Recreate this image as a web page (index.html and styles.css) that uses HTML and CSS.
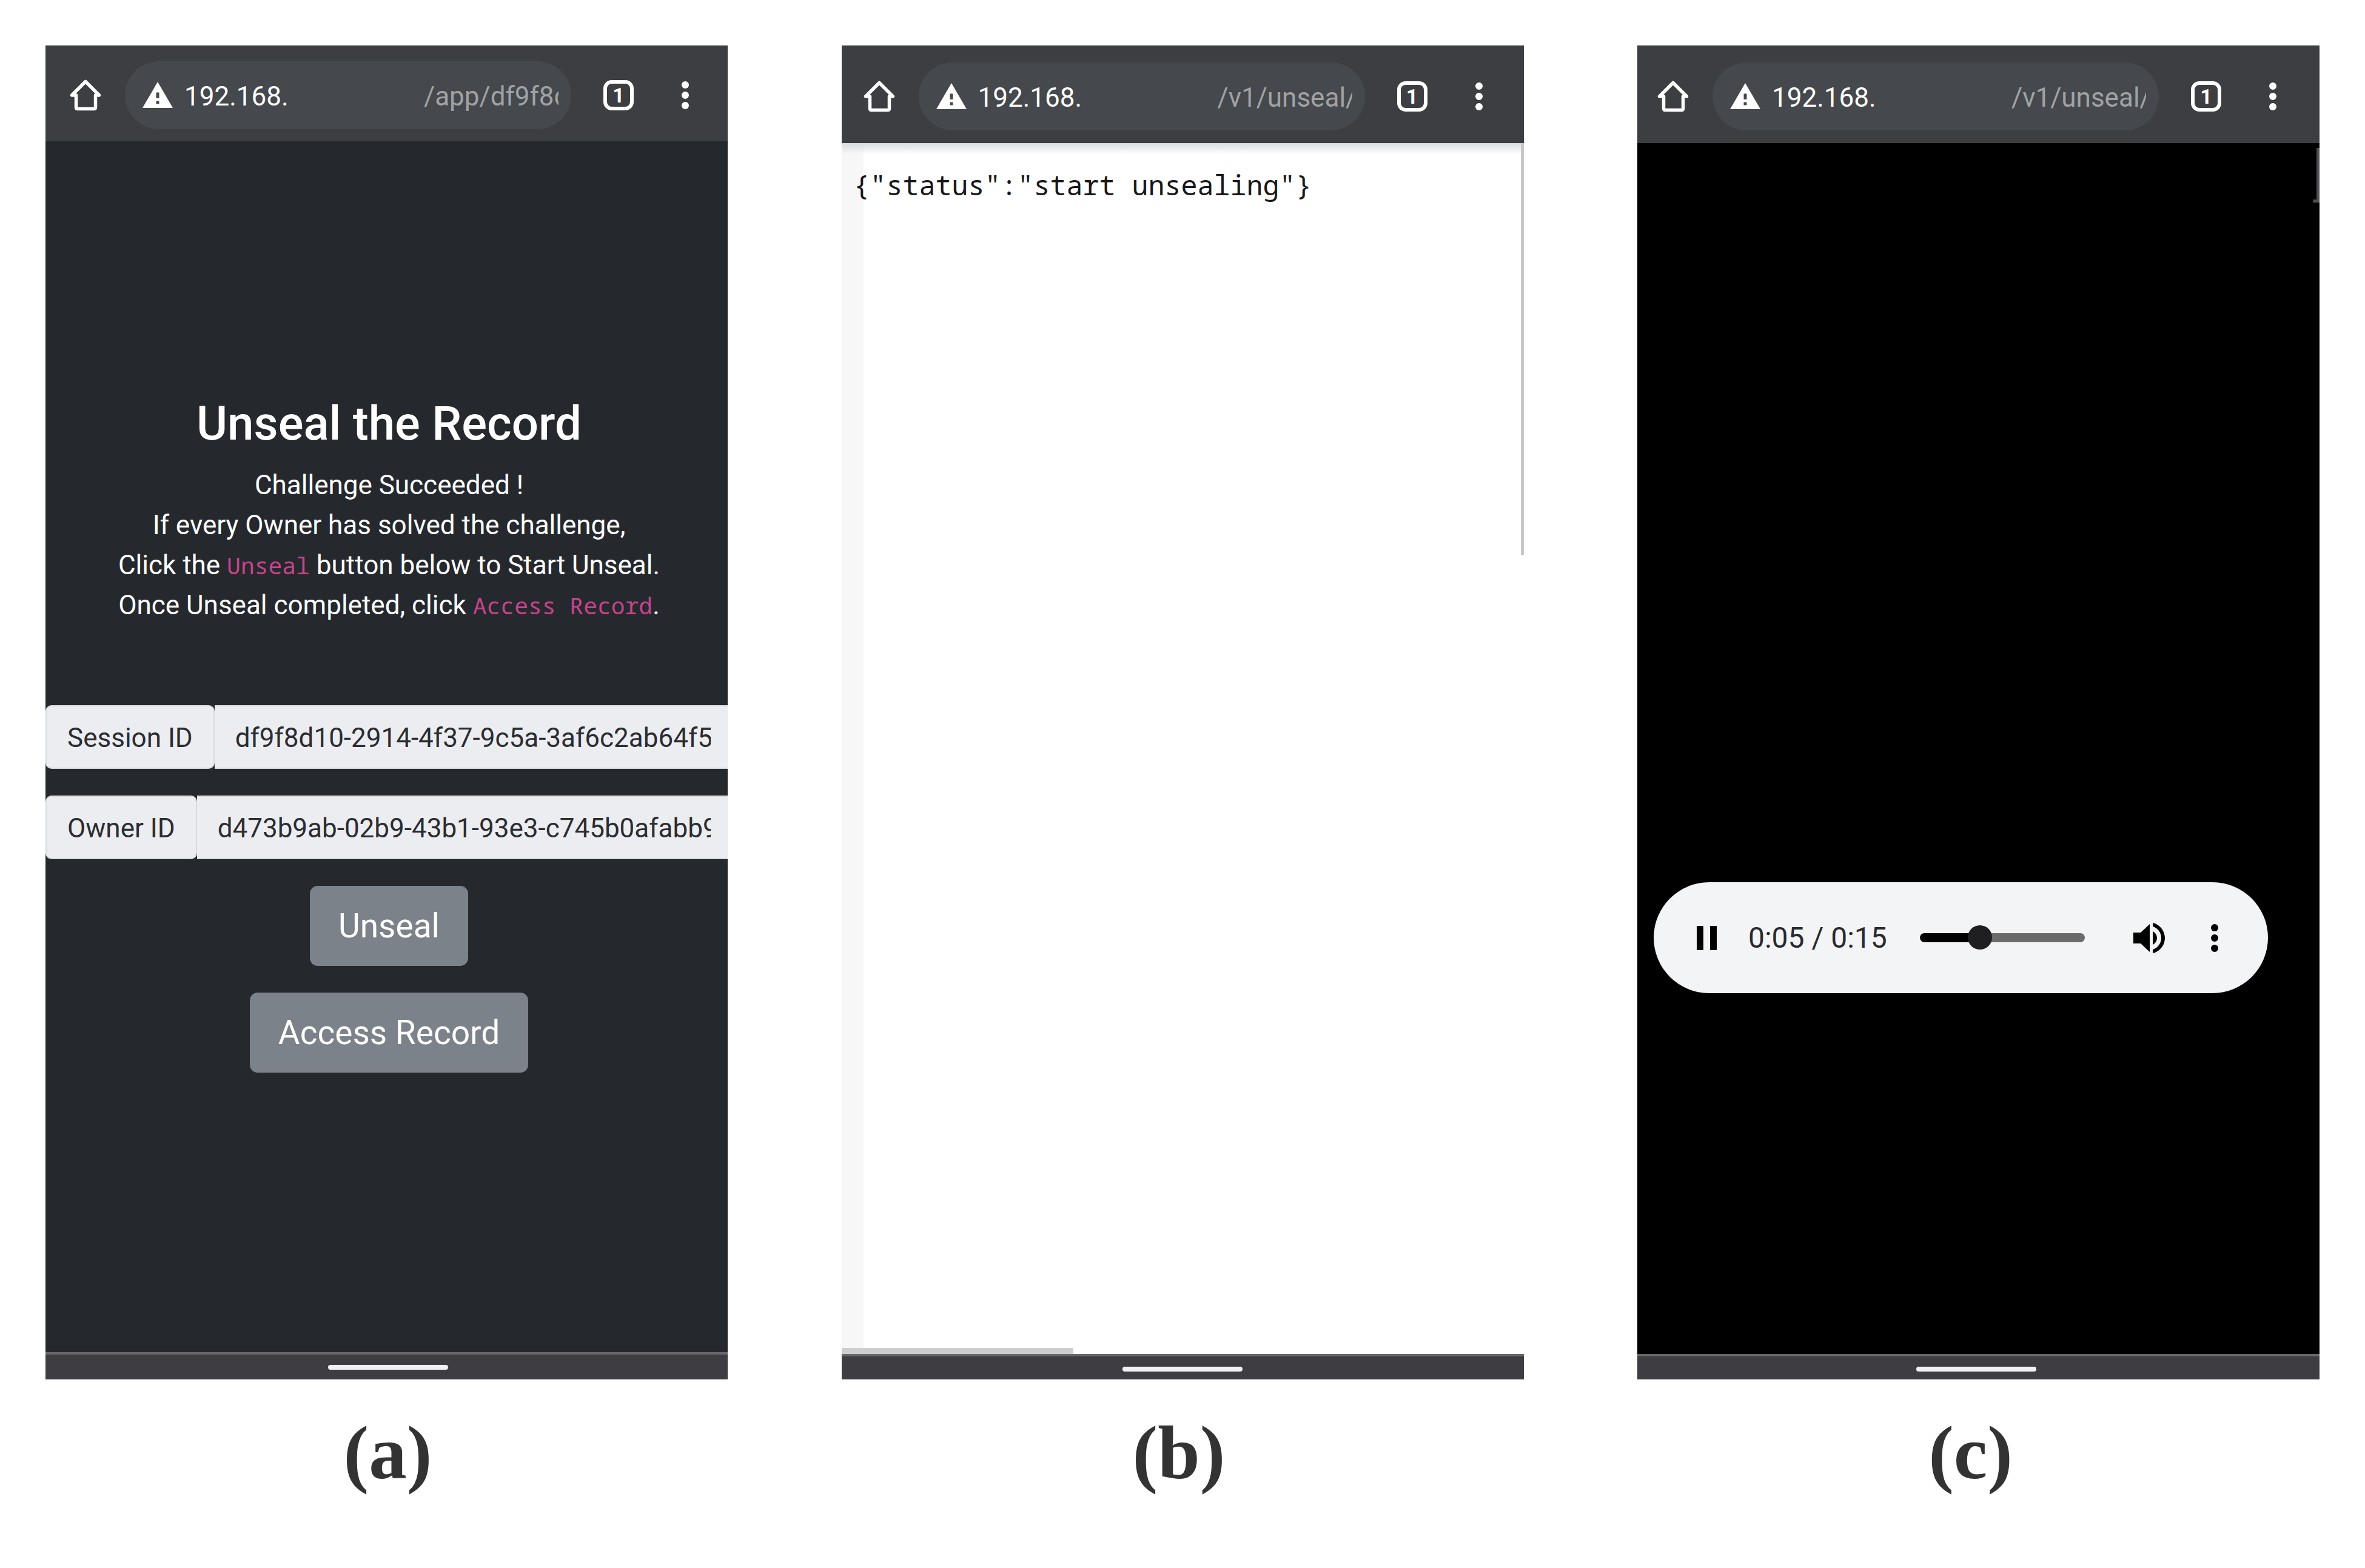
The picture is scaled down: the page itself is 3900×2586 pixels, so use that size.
FILE: index.html
```html
<!DOCTYPE html>
<html lang="en">
<head>
<meta charset="utf-8">
<meta name="viewport" content="width=device-width, initial-scale=1">
<title>Unseal the Record</title>
<link rel="stylesheet" href="styles.css">
</head>
<body>
<svg class="sprite" aria-hidden="true">
  <symbol id="home" viewBox="0 0 52 52"><path d="M26 3.500 3.500 26H10.500V46Q10.500 48.500 13 48.500H40Q42.500 48.500 42.500 46V26H48.500Z" fill="none" stroke="currentColor" stroke-width="5.500" stroke-linejoin="round"/></symbol>
  <symbol id="warning" viewBox="0 0 52 44"><path fill-rule="evenodd" d="M26 0 51 43H1ZM23.500 17.500V27H28.500V17.500ZM23.500 31.500V36.500H28.500V31.500Z" fill="currentColor"/></symbol>
  <symbol id="dots" viewBox="0 0 12 48"><g fill="currentColor"><circle cx="6" cy="7" r="6"/><circle cx="6" cy="24" r="6"/><circle cx="6" cy="41" r="6"/></g></symbol>
  <symbol id="pause" viewBox="0 0 36 42"><path d="M1 1H12V41H1ZM23 1H34V41H23Z" fill="currentColor"/></symbol>
  <symbol id="volume" viewBox="0 0 54 52"><path d="M0 17V35H12L27 49V3L12 17ZM32 15V37C36 35 39 31 39 26S36 17 32 15ZM32 1V7C40 9.500 46 17 46 26S40 42.500 32 45V51C43.500 48.500 52 38 52 26S43.500 3.500 32 1Z" fill="currentColor"/></symbol>
</svg>
<main class="figures">
  <figure class="shot shot-a">
    <div class="phone">
      <header class="toolbar">
        <button class="icon-button" type="button" aria-label="Home"><svg class="icon-home"><use href="#home"/></svg></button>
        <div class="address"><svg class="icon-warning"><use href="#warning"/></svg><span class="host">192.168.</span><span class="path">/app/df9f8d</span></div>
        <button class="tabs" type="button" aria-label="Open tabs">1</button>
        <button class="icon-button" type="button" aria-label="Menu"><svg class="icon-dots"><use href="#dots"/></svg></button>
      </header>
      <section class="screen screen-app">
        <div class="app">
          <h1>Unseal the Record</h1>
          <p class="lead">Challenge Succeeded !<br>If every Owner has solved the challenge,<br>Click the <code>Unseal</code> button below to Start Unseal.<br>Once Unseal completed, click <code>Access Record</code>.</p>
          <div class="input-group"><label for="session">Session ID</label><input id="session" type="text" readonly value="df9f8d10-2914-4f37-9c5a-3af6c2ab64f5"></div>
          <div class="input-group"><label for="owner">Owner ID</label><input id="owner" type="text" readonly value="d473b9ab-02b9-43b1-93e3-c745b0afabb9"></div>
          <button class="action" type="button">Unseal</button>
          <button class="action" type="button">Access Record</button>
        </div>
      </section>
      <footer class="navbar"><span class="handle"></span></footer>
    </div>
    <figcaption>(a)</figcaption>
  </figure>

  <figure class="shot shot-b">
    <div class="phone">
      <header class="toolbar">
        <button class="icon-button" type="button" aria-label="Home"><svg class="icon-home"><use href="#home"/></svg></button>
        <div class="address"><svg class="icon-warning"><use href="#warning"/></svg><span class="host">192.168.</span><span class="path">/v1/unseal/</span></div>
        <button class="tabs" type="button" aria-label="Open tabs">1</button>
        <button class="icon-button" type="button" aria-label="Menu"><svg class="icon-dots"><use href="#dots"/></svg></button>
      </header>
      <section class="screen screen-json">
        <pre>{"status":"start unsealing"}</pre>
        <span class="scroll-y"></span>
        <span class="scroll-x"></span>
      </section>
      <footer class="navbar"><span class="handle"></span></footer>
    </div>
    <figcaption>(b)</figcaption>
  </figure>

  <figure class="shot shot-c">
    <div class="phone">
      <header class="toolbar">
        <button class="icon-button" type="button" aria-label="Home"><svg class="icon-home"><use href="#home"/></svg></button>
        <div class="address"><svg class="icon-warning"><use href="#warning"/></svg><span class="host">192.168.</span><span class="path">/v1/unseal/</span></div>
        <button class="tabs" type="button" aria-label="Open tabs">1</button>
        <button class="icon-button" type="button" aria-label="Menu"><svg class="icon-dots"><use href="#dots"/></svg></button>
      </header>
      <section class="screen screen-audio">
        <div class="player">
          <button class="icon-button" type="button" aria-label="Pause"><svg class="icon-pause"><use href="#pause"/></svg></button>
          <span class="time">0:05 / 0:15</span>
          <input class="seek" type="range" min="0" max="100" value="34" aria-label="Position">
          <button class="icon-button" type="button" aria-label="Mute"><svg class="icon-volume"><use href="#volume"/></svg></button>
          <button class="icon-button" type="button" aria-label="More options"><svg class="icon-dots"><use href="#dots"/></svg></button>
        </div>
        <span class="scroll-corner"></span>
      </section>
      <footer class="navbar"><span class="handle"></span></footer>
    </div>
    <figcaption>(c)</figcaption>
  </figure>
</main>
</body>
</html>
```
FILE: styles.css
```css
* { box-sizing: border-box; }

body {
  margin: 0;
  background: #fff;
  font-family: Roboto, "Liberation Sans", sans-serif;
  font-size: 44px;
}

button, input { font: inherit; }
svg { display: block; }
.sprite { position: absolute; width: 0; height: 0; }

.figures {
  display: grid;
  grid-template-columns: repeat(3, minmax(0, 1fr));
  column-gap: 5%;
  padding: 75px;
}

.shot { margin: 0; }
.shot-a { --start: 40px; --end: 64px; --bar: 158px; --nav: 45px; --nudge: 4px; --caption: 4px; }
.shot-b { --start: 36px; --end: 68px; --bar: 161px; --nav: 42px; --nudge: 0px; --caption: -12px; }
.shot-c { --start: 33px; --end: 71px; --bar: 161px; --nav: 42px; --nudge: -8px; --caption: -26px; }

.phone {
  display: flex;
  flex-direction: column;
  min-height: 2200px;
  overflow: hidden;
}

/* Browser toolbar */
.toolbar {
  display: flex;
  align-items: center;
  height: var(--bar);
  padding: 6px var(--end) 0 var(--start);
  background: #3d3e42;
  color: #fff;
}

.icon-button {
  padding: 0;
  border: 0;
  background: none;
  color: inherit;
}

.icon-home { width: 52px; height: 52px; }
.icon-warning { flex: none; width: 52px; height: 44px; }
.icon-dots { width: 12px; height: 48px; }
.icon-pause { width: 36px; height: 42px; }
.icon-volume { width: 54px; height: 52px; }

.address {
  display: flex;
  flex: 1;
  align-items: center;
  min-width: 0;
  height: 112px;
  margin: 0 53px 0 39px;
  padding: 0 21px 0 28px;
  border-radius: 56px;
  background: #45484c;
  line-height: 52px;
}

.host,
.path { padding-top: 4px; }

.host { margin-left: 18px; }

.path {
  width: 222px;
  margin-left: auto;
  overflow: hidden;
  color: #a0a2a5;
  white-space: nowrap;
}

.tabs {
  width: 50px;
  height: 50px;
  margin-right: 79px;
  padding: 0;
  border: 6px solid #fff;
  border-radius: 14px;
  background: none;
  color: #fff;
  font-size: 34px;
  font-weight: 700;
  line-height: 38px;
}

.screen { position: relative; flex: 1; }

/* Unseal page */
.screen-app { background: #25292e; color: #fff; }

.app {
  display: flex;
  flex-direction: column;
  align-items: center;
  gap: 44px;
  width: calc(100% + 8px);
  padding-top: 420px;
}

.app h1 {
  margin: 0 0 -22px;
  font-size: 78px;
  font-weight: 500;
  line-height: 92px;
}

.lead {
  margin: 0 0 88px;
  line-height: 66px;
  text-align: center;
}

code, pre { font-family: "Noto Sans Mono", "Droid Sans Mono", "Liberation Mono", monospace; }
code { color: #c7438a; font-size: 38px; }

.input-group {
  display: flex;
  width: 100%;
  height: 105px;
  color: #2b2d31;
}

.input-group label,
.input-group input {
  border: 2px solid #d8dade;
  background: #ecedf1;
  padding: 2px 34px 0;
  line-height: 100px;
}

.input-group label { border-radius: 10px; white-space: nowrap; }

.input-group input {
  flex: 1;
  min-width: 0;
  border-left: 0;
  border-radius: 0;
  color: inherit;
}

.action {
  height: 132px;
  padding: 0 47px;
  border: 0;
  border-radius: 13px;
  background: #7b828a;
  color: #fff;
  font-size: 55px;
  line-height: 132px;
}

/* JSON response */
.screen-json {
  background: linear-gradient(#d9dade, transparent 18px), linear-gradient(90deg, #f7f7f7 36px, #fff 36px);
  color: #18181a;
}

.screen-json pre {
  margin: 0;
  padding: 42px 20px;
  font-size: 45px;
  line-height: 54px;
}

.scroll-y {
  position: absolute;
  top: 0;
  right: 0;
  width: 5px;
  height: 34%;
  background: #c6c6c8;
}

.scroll-x {
  position: absolute;
  bottom: 0;
  left: 0;
  width: 34%;
  height: 10px;
  background: #cecece;
}

/* Audio player */
.screen-audio { background: #000; }

.player {
  display: flex;
  align-items: center;
  width: 90%;
  height: 183px;
  margin: 1219px 0 0 27px;
  padding: 0 82px 0 70px;
  border-radius: 92px;
  background: #f3f4f6;
  color: #000;
}

.time { margin-left: 50px; color: #2a2a2d; font-size: 48px; white-space: nowrap; }

.seek {
  flex: 1;
  min-width: 0;
  height: 40px;
  margin: 0 80px 0 54px;
  appearance: none;
  background: none;
}

.seek::-webkit-slider-runnable-track {
  height: 15px;
  border-radius: 8px;
  background: linear-gradient(90deg, #000 36%, #6b6b6b 36%);
}

.seek::-webkit-slider-thumb {
  width: 40px;
  height: 40px;
  margin-top: -13px;
  appearance: none;
  border-radius: 50%;
  background: #1f1f21;
}

.player .icon-volume { margin-right: 74px; }

.scroll-corner {
  position: absolute;
  top: 8px;
  right: 0;
  width: 11px;
  height: 90px;
  border-right: 5px solid #505053;
  border-bottom: 5px solid #505053;
}

/* Gesture bar */
.navbar {
  display: flex;
  justify-content: center;
  height: var(--nav);
  padding-top: 17px;
  border-top: 4px solid #68686c;
  background: #3e3e42;
  text-indent: 0;
}

.handle {
  width: 198px;
  height: 8px;
  margin-left: var(--nudge);
  border-radius: 4px;
  background: #f1f1f5;
}

figcaption {
  padding-top: 55px;
  text-indent: var(--caption);
  color: #333;
  font-family: "Liberation Serif", serif;
  font-size: 125px;
  font-weight: 700;
  line-height: 132px;
  text-align: center;
}
```
